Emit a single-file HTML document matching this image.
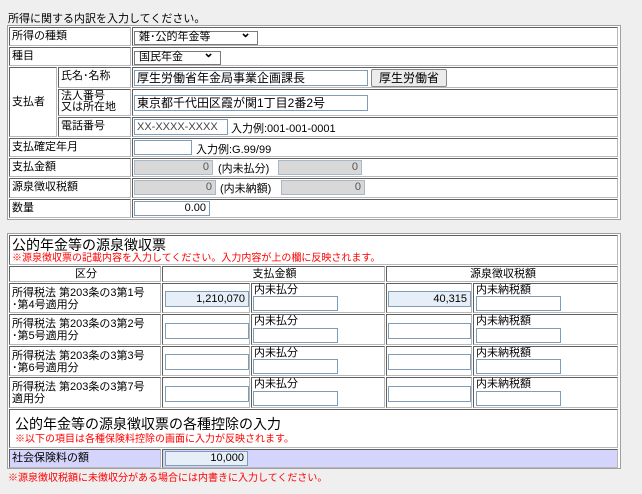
<!DOCTYPE html>
<html><head><meta charset="utf-8"><style>
body{margin:0;width:642px;height:494px;background:#efefef;font-family:"Liberation Sans","Noto Sans CJK JP",sans-serif;font-size:11px;color:#000;position:relative;overflow:hidden}
div,span{position:absolute;box-sizing:border-box;white-space:nowrap}
.o{background:#fff;border:1px solid #a0a0a0}
.c{background:#fff;border:1px solid;border-color:#606060 #b8b8b8 #b8b8b8 #606060;line-height:16px;padding-left:2px}
.i{background:#fff;border:1px solid #7f9db9;text-align:right;padding-right:3px;line-height:12px;font-size:11px}
.g{background:#d8d8d8;border-color:#a8b8c8;color:#555}
.b{background:#e6eef8}
.sel{background:#fff;border:1px solid #7a7a7a;padding-left:4px;line-height:11px;font-size:11px}
.sel:after{content:"⌄";position:absolute;right:6px;top:-5px;font-weight:bold;font-size:13px}
.r{color:#f00;font-size:10px}
.t{line-height:12px}
</style></head><body>
<span style="left:8px;top:13px;line-height:12px">所得に関する内訳を入力してください。</span>
<div class="o" style="left:7px;top:25px;width:614px;height:195px"></div>
<div class="c" style="left:9px;top:27px;width:122px;height:19px">所得の種類</div>
<div class="c" style="left:132px;top:27px;width:486px;height:19px"></div>
<div class="sel" style="left:134px;top:31px;width:124px;height:14px">雑･公的年金等</div>
<div class="c" style="left:9px;top:47px;width:122px;height:19px">種目</div>
<div class="c" style="left:132px;top:47px;width:486px;height:19px"></div>
<div class="sel" style="left:134px;top:51px;width:87px;height:14px">国民年金</div>
<div class="c" style="left:9px;top:67px;width:48px;height:70px;line-height:68px">支払者</div>
<div class="c" style="left:58px;top:67px;width:73px;height:21px">氏名･名称</div>
<div class="c" style="left:132px;top:67px;width:486px;height:21px"></div>
<div class="i" style="left:134px;top:70px;width:234px;height:16px;text-align:left;padding-left:2px;font-size:12px;line-height:14px">厚生労働省年金局事業企画課長</div>
<div style="left:371px;top:69px;width:76px;height:18px;background:#ececec;border:1px solid #888;border-radius:2px;text-align:center;line-height:16px;font-size:12px">厚生労働省</div>
<div class="c" style="left:58px;top:89px;width:73px;height:27px;line-height:11px;padding-top:1px">法人番号<br>又は所在地</div>
<div class="c" style="left:132px;top:89px;width:486px;height:27px"></div>
<div class="i" style="left:134px;top:95px;width:234px;height:16px;text-align:left;padding-left:2px;font-size:12px;line-height:14px">東京都千代田区霞が関1丁目2番2号</div>
<div class="c" style="left:58px;top:117px;width:73px;height:20px">電話番号</div>
<div class="c" style="left:132px;top:117px;width:486px;height:20px"></div>
<div class="i" style="left:134px;top:119px;width:94px;height:16px;text-align:left;padding-left:2px;color:#444;line-height:14px">XX-XXXX-XXXX</div>
<span style="left:231px;top:120px;font-size:11px">入力例:001-001-0001</span>
<div class="c" style="left:9px;top:138px;width:122px;height:19px">支払確定年月</div>
<div class="c" style="left:132px;top:138px;width:486px;height:19px"></div>
<div class="i" style="left:134px;top:140px;width:58px;height:15px"></div>
<span style="left:196px;top:141px;font-size:11px">入力例:G.99/99</span>
<div class="c" style="left:9px;top:158px;width:122px;height:19px">支払金額</div>
<div class="c" style="left:132px;top:158px;width:486px;height:19px"></div>
<div class="i g" style="left:134px;top:160px;width:79px;height:15px">0</div>
<span style="left:218px;top:160px">(内未払分)</span>
<div class="i g" style="left:278px;top:160px;width:84px;height:15px">0</div>
<div class="c" style="left:9px;top:178px;width:122px;height:20px">源泉徴収税額</div>
<div class="c" style="left:132px;top:178px;width:486px;height:20px"></div>
<div class="i g" style="left:134px;top:180px;width:82px;height:15px">0</div>
<span style="left:220px;top:180px">(内未納額)</span>
<div class="i g" style="left:281px;top:180px;width:84px;height:15px">0</div>
<div class="c" style="left:9px;top:199px;width:122px;height:19px">数量</div>
<div class="c" style="left:132px;top:199px;width:486px;height:19px"></div>
<div class="i" style="left:134px;top:201px;width:76px;height:15px">0.00</div>

<div class="o" style="left:7px;top:233px;width:614px;height:236px"></div>
<div class="c" style="left:9px;top:235px;width:609px;height:30px;line-height:normal">
<span style="left:2px;top:2px;font-size:14px;line-height:15px">公的年金等の源泉徴収票</span>
<span class="r" style="left:2px;top:17px;line-height:11px">※源泉徴収票の記載内容を入力してください。入力内容が上の欄に反映されます。</span></div>
<div class="c" style="left:9px;top:266px;width:152px;height:16px;text-align:center;line-height:14px">区分</div>
<div class="c" style="left:162px;top:266px;width:223px;height:16px;text-align:center;line-height:14px">支払金額</div>
<div class="c" style="left:386px;top:266px;width:232px;height:16px;text-align:center;line-height:14px">源泉徴収税額</div>

<div class="c t" style="left:9px;top:283px;width:152px;height:30px;padding-top:3px">所得税法 第203条の3第1号<br>･第4号適用分</div>
<div class="c" style="left:162px;top:283px;width:88px;height:30px"></div>
<div class="i b" style="left:165px;top:291px;width:84px;height:16px;line-height:14px">1,210,070</div>
<div class="c t" style="left:251px;top:283px;width:134px;height:30px">内未払分</div>
<div class="i" style="left:253px;top:296px;width:85px;height:15px"></div>
<div class="c" style="left:386px;top:283px;width:86px;height:30px"></div>
<div class="i b" style="left:388px;top:291px;width:83px;height:16px;line-height:14px">40,315</div>
<div class="c t" style="left:473px;top:283px;width:145px;height:30px">内未納税額</div>
<div class="i" style="left:476px;top:296px;width:85px;height:15px"></div>

<div class="c t" style="left:9px;top:314px;width:152px;height:31px;padding-top:3px">所得税法 第203条の3第2号<br>･第5号適用分</div>
<div class="c" style="left:162px;top:314px;width:88px;height:31px"></div>
<div class="i" style="left:165px;top:323px;width:84px;height:16px"></div>
<div class="c t" style="left:251px;top:314px;width:134px;height:31px">内未払分</div>
<div class="i" style="left:253px;top:328px;width:85px;height:15px"></div>
<div class="c" style="left:386px;top:314px;width:86px;height:31px"></div>
<div class="i" style="left:388px;top:323px;width:83px;height:16px"></div>
<div class="c t" style="left:473px;top:314px;width:145px;height:31px">内未納税額</div>
<div class="i" style="left:476px;top:328px;width:85px;height:15px"></div>

<div class="c t" style="left:9px;top:346px;width:152px;height:30px;padding-top:3px">所得税法 第203条の3第3号<br>･第6号適用分</div>
<div class="c" style="left:162px;top:346px;width:88px;height:30px"></div>
<div class="i" style="left:165px;top:354px;width:84px;height:16px"></div>
<div class="c t" style="left:251px;top:346px;width:134px;height:30px">内未払分</div>
<div class="i" style="left:253px;top:359px;width:85px;height:15px"></div>
<div class="c" style="left:386px;top:346px;width:86px;height:30px"></div>
<div class="i" style="left:388px;top:354px;width:83px;height:16px"></div>
<div class="c t" style="left:473px;top:346px;width:145px;height:30px">内未納税額</div>
<div class="i" style="left:476px;top:359px;width:85px;height:15px"></div>

<div class="c t" style="left:9px;top:377px;width:152px;height:31px;padding-top:3px">所得税法 第203条の3第7号<br>適用分</div>
<div class="c" style="left:162px;top:377px;width:88px;height:31px"></div>
<div class="i" style="left:165px;top:386px;width:84px;height:16px"></div>
<div class="c t" style="left:251px;top:377px;width:134px;height:31px">内未払分</div>
<div class="i" style="left:253px;top:391px;width:85px;height:15px"></div>
<div class="c" style="left:386px;top:377px;width:86px;height:31px"></div>
<div class="i" style="left:388px;top:386px;width:83px;height:16px"></div>
<div class="c t" style="left:473px;top:377px;width:145px;height:31px">内未納税額</div>
<div class="i" style="left:476px;top:391px;width:85px;height:15px"></div>

<div class="c" style="left:9px;top:409px;width:609px;height:39px;line-height:normal">
<span style="left:5px;top:7px;font-size:14px;line-height:15px">公的年金等の源泉徴収票の各種控除の入力</span>
<span class="r" style="left:5px;top:24px;line-height:11px">※以下の項目は各種保険料控除の画面に入力が反映されます。</span></div>
<div class="c" style="left:9px;top:449px;width:152px;height:19px;background:#d4d4fc">社会保険料の額</div>
<div class="c" style="left:162px;top:449px;width:456px;height:19px;background:#d4d4fc"></div>
<div class="i b" style="left:165px;top:451px;width:83px;height:15px">10,000</div>
<span class="r" style="left:8px;top:473px;line-height:12px">※源泉徴収税額に未徴収分がある場合には内書きに入力してください。</span>
</body></html>
